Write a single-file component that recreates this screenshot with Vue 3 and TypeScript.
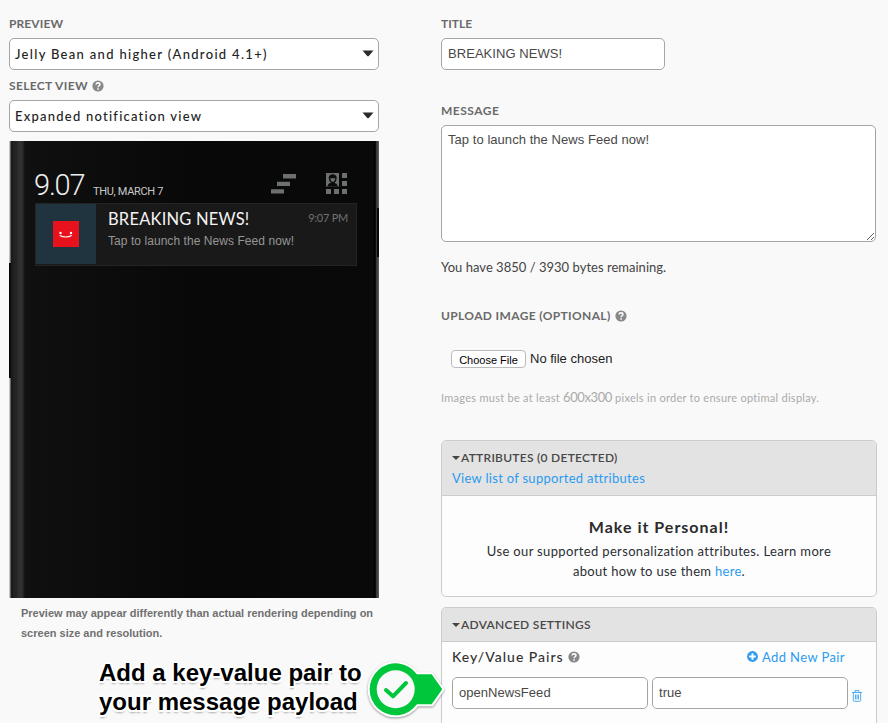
<script setup lang="ts">
import { ref } from 'vue'

const preview = ref('Jelly Bean and higher (Android 4.1+)')
const view = ref('Expanded notification view')
const title = ref('BREAKING NEWS!')
const message = ref('Tap to launch the News Feed now!')
const pair = ref({ key: 'openNewsFeed', value: 'true' })
</script>

<template>
  <main class="page">
    <section class="left">
      <div class="label"><span class="t-preview">PREVIEW</span></div>
      <div class="select"><span class="t-sel1">{{ preview }}</span><svg width="12" height="7" viewBox="0 0 12 7"><path d="M.5.5h11L7 5.8q-1 1-2 0z" fill="#2b2b2b" /></svg></div>
      <div class="label second">
        <span class="t-view">SELECT VIEW</span>
        <svg class="help" viewBox="0 0 12 12"><circle cx="6" cy="6" r="5.6" fill="#888" /><path d="M4.1 4.5C4.2 2.3 7.9 2.4 7.9 4.5 7.9 5.7 6.2 5.8 6.1 7.2M6.1 8.2v1.5" fill="none" stroke="#f9f9f9" stroke-width="1.6" /></svg>
      </div>
      <div class="select"><span class="t-sel2">{{ view }}</span><svg width="12" height="7" viewBox="0 0 12 7"><path d="M.5.5h11L7 5.8q-1 1-2 0z" fill="#2b2b2b" /></svg></div>

      <div class="phone">
        <i class="key key-left"></i>
        <i class="key key-right"></i>
        <div class="status">
          <span class="clock">9.07</span>
          <span class="date">THU, MARCH 7</span>
          <svg class="clear" width="25" height="20" viewBox="0 0 25 20" fill="#6c7070"><path d="M12 0h13v4.4H12zM6 7.8h13v4.2H6zM0 15.2h13v4.3H0z" /></svg>
          <svg class="quick" width="21" height="21" viewBox="0 0 21 21">
            <path fill="#6c7070" d="M0 0h13v13.4H0zM16 0h5v5h-5zM16 8h5v5h-5zM0 16h5v5H0zM8 16h5v5H8zM16 16h5v5h-5z" />
            <path fill="#0b0b0b" d="M1.3 13.4q1-3.4 4-3.7Q2.7 8 2.7 5c0-5 8-5 8 0q0 3-2.2 4.7 2.5.5 3.6 3.7z" />
            <path fill="#6c7070" d="M4.1 5.3h5.3Q9 8.4 6.8 9 4.6 8.4 4.1 5.3z" />
          </svg>
        </div>
        <div class="notice">
          <div class="thumb">
            <svg width="26" height="26" viewBox="0 0 26 26"><path fill="#e8121c" d="M0 0h26v26H0z" /><path d="M6.7 14.5q6 3 12 0" fill="none" stroke="#fff" stroke-width="1.2" /><circle cx="7.5" cy="12" r="1.2" fill="#fff" /><circle cx="18" cy="12" r="1.2" fill="#fff" /></svg>
          </div>
          <div class="copy">
            <div class="headline"><span class="t-head">{{ title }}</span><span class="time">9:07 PM</span></div>
            <div class="body">{{ message }}</div>
          </div>
        </div>
      </div>
      <p class="caption"><span>Preview may appear differently than actual rendering depending on</span><br /><span>screen size and resolution.</span></p>
      <p class="callout"><span>Add a key-value pair to</span><br /><span>your message payload</span></p>
      <svg class="badge" width="84" height="64" viewBox="0 0 84 64">
        <path d="M53.9 16.3H68.7L79.3 31.3 68.7 46.3H53.9A26 26 0 1 1 53.9 16.3Z" fill="#00c63b" stroke="#fff" stroke-width="4" stroke-linejoin="round" paint-order="stroke" />
        <circle cx="32.7" cy="31.3" r="19" fill="#f9f9f9" />
        <path d="M23 32l7 6.3L43 25" fill="none" stroke="#00c63b" stroke-width="4" stroke-linecap="round" stroke-linejoin="round" />
      </svg>
    </section>

    <section class="right">
      <div class="label"><span>TITLE</span></div>
      <input v-model="title" class="input title-input" />
      <div class="label message-label"><span class="t-message">MESSAGE</span></div>
      <textarea v-model="message" class="message"></textarea>
      <p class="bytes">You have 3850 / 3930 bytes remaining.</p>
      <div class="label upload-label">
        <span class="t-upload">UPLOAD IMAGE (OPTIONAL)</span>
        <svg class="help" viewBox="0 0 12 12"><circle cx="6" cy="6" r="5.6" fill="#888" /><path d="M4.1 4.5C4.2 2.3 7.9 2.4 7.9 4.5 7.9 5.7 6.2 5.8 6.1 7.2M6.1 8.2v1.5" fill="none" stroke="#f9f9f9" stroke-width="1.6" /></svg>
      </div>
      <div class="file"><button>Choose File</button><span>No file chosen</span></div>
      <p class="hint">Images must be at least <span class="size">600x300</span> pixels in order to ensure optimal display.</p>

      <div class="panel attributes">
        <div class="head">
          <div class="head-title"><i class="caret"></i><span class="t-attr">ATTRIBUTES (0 DETECTED)</span></div>
          <a class="t-list">View list of supported attributes</a>
        </div>
        <div class="personal">
          <h3>Make it Personal!</h3>
          <p><span class="t-use1">Use our supported personalization attributes. Learn more</span><br /><span class="t-use2">about how to use them <a>here</a>.</span></p>
        </div>
      </div>

      <div class="panel advanced">
        <div class="head"><div class="head-title"><i class="caret"></i><span class="t-adv">ADVANCED SETTINGS</span></div></div>
        <div class="pairs-bar">
          <span class="t-kv">Key/Value Pairs</span>
          <svg class="help" viewBox="0 0 12 12"><circle cx="6" cy="6" r="5.6" fill="#888" /><path d="M4.1 4.5C4.2 2.3 7.9 2.4 7.9 4.5 7.9 5.7 6.2 5.8 6.1 7.2M6.1 8.2v1.5" fill="none" stroke="#f9f9f9" stroke-width="1.6" /></svg>
          <a class="add"><svg width="11" height="11" viewBox="0 0 11 11"><circle cx="5.5" cy="5.5" r="5.4" fill="#2b9bf0" /><path d="M5.5 2.2v6.6M2.2 5.5h6.6" stroke="#fff" stroke-width="2" /></svg><span>Add New Pair</span></a>
        </div>
        <div class="pair">
          <input v-model="pair.key" class="input" />
          <input v-model="pair.value" class="input" />
          <svg class="trash" width="10" height="12" viewBox="0 0 10 12" fill="none" stroke="#3ba3f0"><path d="M0 2.5h10M3 2.5V.6h4v1.9M1.3 3v7.3q0 1 1 1h5.4q1 0 1-1V3M3.5 4.5v5M5 4.5v5M6.5 4.5v5" stroke-width=".9" /></svg>
        </div>
      </div>
    </section>
  </main>
</template>

<style>
body { background: #f9f9f9; overflow: hidden; }
</style>

<style scoped>
* { box-sizing: border-box; }
p, h3 { margin: 0; }
.page { display: flex; gap: 62px; width: 888px; height: 723px; overflow: hidden; padding: 16px 11px 0 9px; background: #f9f9f9; font: 13px/16px Lato, sans-serif; font-variant-ligatures: none; color: #333; position: relative; }
.left { width: 370px; flex: none; }
.right { width: 436px; flex: none; }
span, a { white-space: nowrap; }
a { color: #2b9bf0; }
.label { display: flex; align-items: center; gap: 4px; height: 16px; margin-bottom: 6px; font-size: 12px; font-weight: 700; color: #6a6a6a; }
.second { margin-top: 8px; }
.t-preview { letter-spacing: .1px; }
.t-view { letter-spacing: .35px; }
.t-message { letter-spacing: .5px; }
.t-upload { letter-spacing: .36px; }
.help { width: 12px; height: 12px; flex: none; }
.select { display: flex; align-items: center; justify-content: space-between; height: 32px; border: 1px solid #a5a5a5; border-radius: 5px; background: #fff; padding: 0 4px 1px 5px; color: #222; font-weight: 500; }
.t-sel1 { letter-spacing: 1.31px; }
.t-sel2 { letter-spacing: 1.23px; }

.phone { position: relative; height: 457px; margin-top: 9px; padding: 31px 22px 0 26px; background: linear-gradient(90deg, #ddd 0, #aaa 1px, #222 2px, #161616 3px, #242424 5px, #222 7px, #303030 10px, #303030 13px, #111 16px, #0f0f0f 30px, #080808 50%, #090909 364px, #010101 366px, #171717 367px, #555 368px, #333 369px, #777 370px); }
.key { position: absolute; width: 2px; background: #090909; }
.key-left { left: 0; top: 122px; height: 115px; }
.key-right { right: 0; top: 67px; height: 49px; }
.status { display: flex; height: 31px; font-family: Roboto, sans-serif; }
.clock { width: 59px; margin-left: -1px; font-size: 29px; line-height: 26px; font-weight: 300; letter-spacing: -1.2px; color: #eee; }
.date { width: 178px; font-size: 11px; line-height: 40px; color: #c8c8c8; letter-spacing: -.32px; }
.clear { margin-top: 2px; }
.quick { margin: 1px 0 0 30px; }
.notice { display: flex; width: 322px; height: 63px; border: 1px solid #242424; background: #191919; }
.thumb { display: flex; align-items: center; justify-content: center; width: 60px; height: 60px; background: #1f343e; }
.copy { flex: 1; padding: 5px 8px 0 12px; }
.headline { display: flex; justify-content: space-between; line-height: 20px; color: #f4f4f4; font-size: 16.5px; font-weight: 400; }
.t-head { letter-spacing: .2px; }
.time { font-size: 11px; line-height: 18px; font-weight: 400; color: #6d7375; letter-spacing: -.25px; }
.body { font: 12px/24px "Liberation Sans", sans-serif; letter-spacing: .06px; color: #969696; }
.caption { padding: 5px 0 0 12px; font: bold 11px/20px "Liberation Sans", sans-serif; color: #707070; }
.callout { padding: 15px 0 0 90px; font: bold 24px/29px "Liberation Sans", sans-serif; color: #000; text-shadow: -2px 0 #fff, 2px 0 #fff, 0 -2px #fff, 0 2px #fff, -1.5px -1.5px #fff, 1.5px -1.5px #fff, -1.5px 1.5px #fff, 1.5px 1.5px #fff, 0 3px 2px #aaa; }
.badge { position: absolute; left: 363px; top: 658px; z-index: 2; filter: drop-shadow(0 1.5px 1px #0006); }

.input, .message { display: block; margin: 0; height: 32px; border: 1px solid #a5a5a5; border-radius: 5px; background: #fff; padding: 0 6px 2px; font: 13px/16px "Liberation Sans", sans-serif; letter-spacing: .05px; color: #484848; outline: none; }
.title-input { width: 224px; }
.message-label { margin-top: 33px; }
.message { width: 435px; height: 117px; padding-top: 6px; }
.bytes { margin-top: 17px; color: #444; letter-spacing: .02px; }
.upload-label { margin-top: 33px; margin-bottom: 26px; }
.file { display: flex; gap: 4px; height: 18px; padding-left: 10px; font: 13px/18px "Liberation Sans", sans-serif; color: #222; }
.file button { width: 75px; height: 18px; padding: 2px 0 0; border: 1px solid #bbb; border-radius: 4px; background: #fff; font: 11px/15px "Liberation Sans", sans-serif; color: #000; }
.hint { margin-top: 21px; font-size: 11px; letter-spacing: .27px; color: #aaa; white-space: nowrap; }
.size { font-size: 13px; letter-spacing: -.4px; }
.panel { border: 1px solid #ccc; border-radius: 5px; background: #fdfdfd; overflow: hidden; }
.head { background: #e3e3e3; border-bottom: 1px solid #ccc; padding-left: 10px; }
.head-title { display: flex; align-items: center; gap: 1px; font-size: 12px; font-weight: 600; color: #484848; }
.t-attr { letter-spacing: .27px; }
.t-adv { letter-spacing: .3px; }
.caret { border: 4px solid transparent; border-top-color: #444; border-bottom: 0; width: 0; }
.attributes { margin-top: 34px; height: 157px; }
.attributes .head { height: 55px; padding-top: 9px; }
.attributes .head a { display: block; line-height: 24px; letter-spacing: .29px; }
.personal { padding-top: 21px; text-align: center; color: #2b2f33; }
.personal h3 { font-size: 16px; line-height: 20px; font-weight: 700; letter-spacing: 1px; color: #2b2b2b; }
.personal p { line-height: 20px; padding-top: 4px; }
.t-use1 { letter-spacing: .35px; }
.t-use2 { letter-spacing: .3px; }
.advanced { margin-top: 10px; height: 140px; }
.advanced .head { height: 34px; padding-top: 9px; }
.pairs-bar { display: flex; align-items: center; height: 35px; gap: 4px; padding: 0 31px 6px 10px; font-size: 14px; }
.t-kv { font-weight: 500; letter-spacing: 1px; }
.add { display: flex; align-items: center; gap: 4px; margin-left: auto; font-size: 13px; letter-spacing: .4px; }
.pair { display: flex; gap: 4px; padding-left: 10px; }
.pair .input { width: 196px; }
.trash { margin-top: 13px; }
</style>
